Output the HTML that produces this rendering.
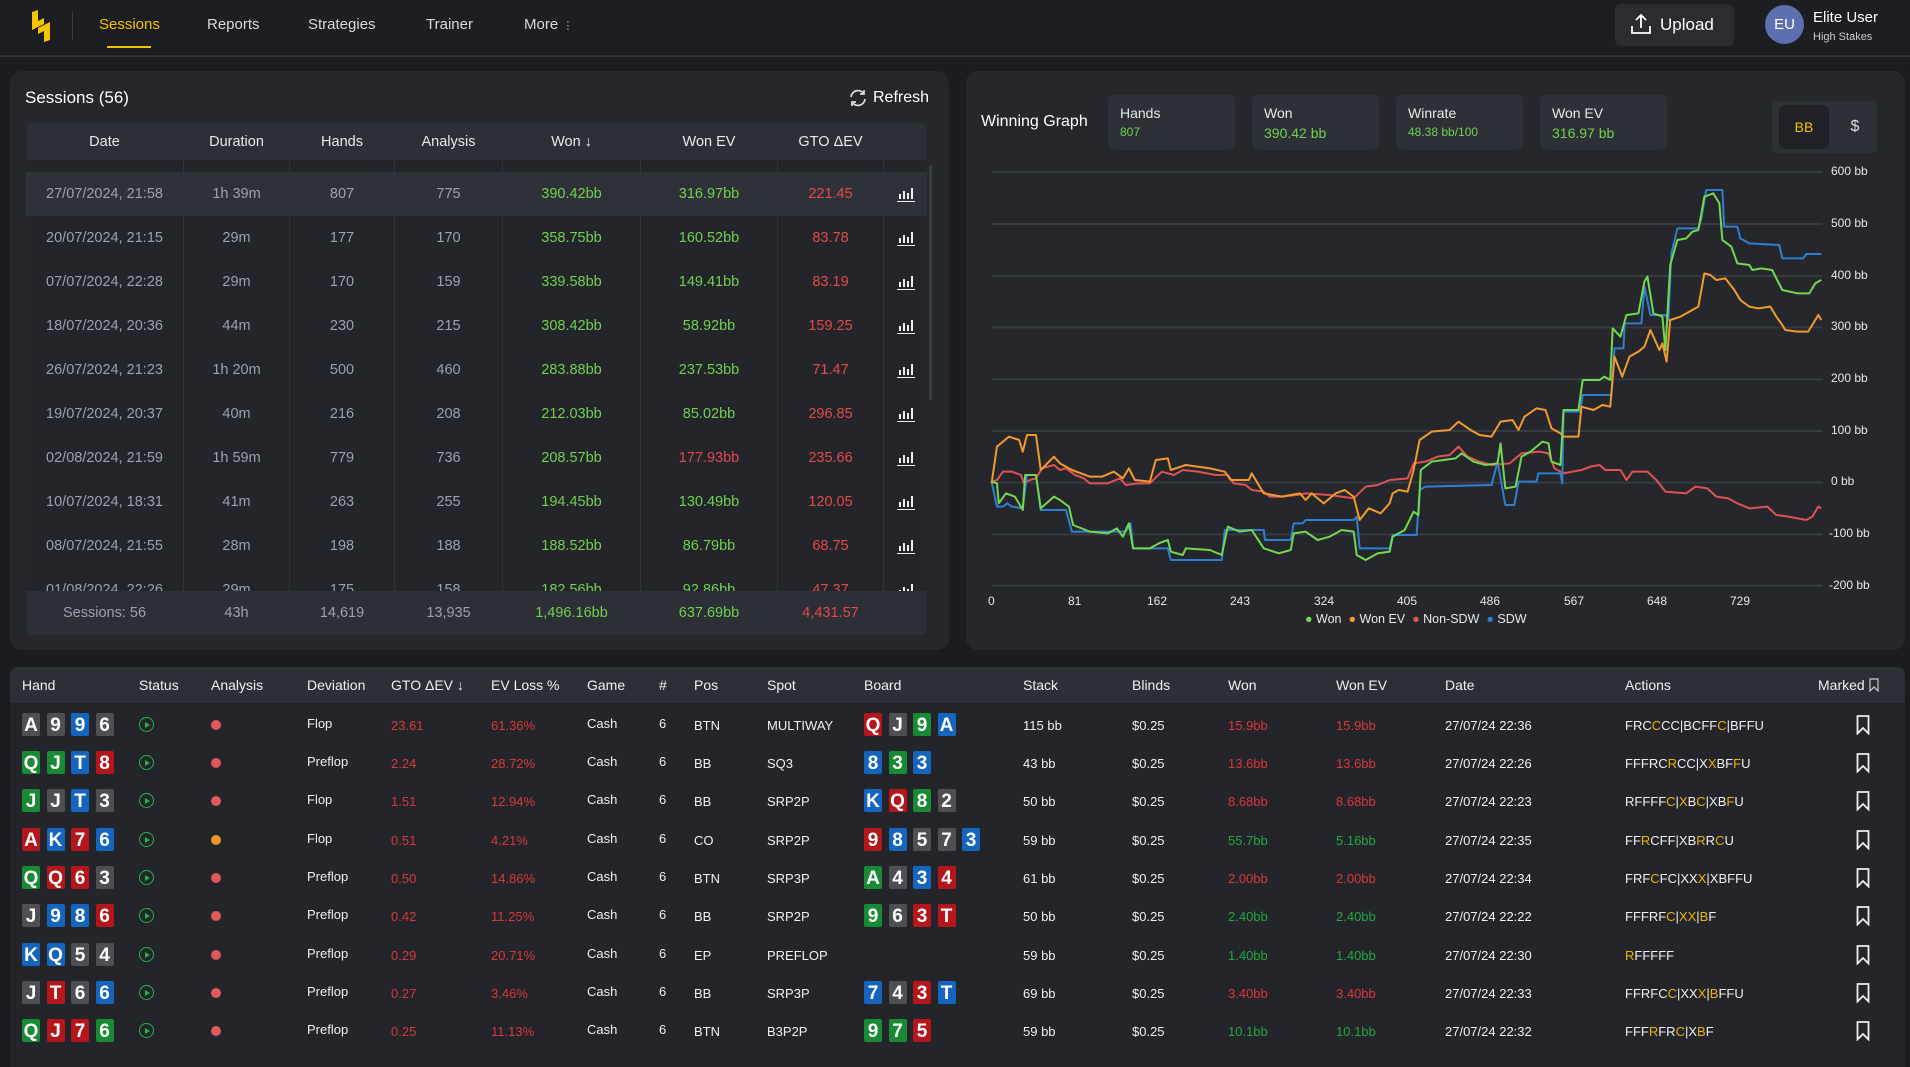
<!DOCTYPE html>
<html><head><meta charset="utf-8">
<style>
*{box-sizing:border-box;margin:0;padding:0}
body{width:1910px;height:1052px;background:#1b1c20;font-family:"Liberation Sans",sans-serif;color:#e8e8ea;position:relative;overflow:hidden}
.a{position:absolute}
.nav{left:0;top:0;width:1910px;height:57px;background:#1d1e22;border-bottom:2px solid #2e3036}
.ni{top:16px;font-size:15px;color:#d8d9dc}
.panel{background:#25272c;border-radius:12px}
.st{position:absolute;left:26px;width:901px;display:flex;align-items:center;font-size:14.5px;color:#9aa1b2}
.st div{text-align:center;border-right:1px solid #30333a;height:100%;display:flex;align-items:center;justify-content:center}
.st div:nth-child(1){width:158px}.st div:nth-child(2){width:106px}.st div:nth-child(3){width:105px}.st div:nth-child(4){width:108px}.st div:nth-child(5){width:138px}.st div:nth-child(6){width:137px}.st div:nth-child(7){width:106px}.st div:nth-child(8){width:43px;border-right:none}
.g{color:#6fd14d}.r{color:#e24a4a}
.bar{display:inline-block;width:18px;height:16px;position:relative}
.bar i{position:absolute;bottom:3px;width:2px;background:#eee}
.bar b{position:absolute;bottom:0;left:0;width:18px;height:1.5px;background:#eee}
.box{background:#2e3037;border-radius:6px;position:absolute;top:95px;height:55px;width:127px;padding:10px 12px;font-size:14px}
.box span{display:block;font-size:14px;color:#6fd14d;margin-top:4px}
.hr{position:absolute;left:10px;width:1895px;height:38px;font-size:13px;color:#f0f0f2}
.hr>*{position:absolute;top:12px}
.c{display:inline-block;width:18px;height:23px;border-radius:2px;color:#fff;font-weight:bold;font-style:normal;font-size:19px;text-align:center;line-height:25px;margin-right:6.5px;vertical-align:top}
.s{background:#4e4f52}.h{background:#b4161b}.d{background:#1565bf}.k{background:#178a33}
.cards{top:7px!important}
.play{top:11px!important;width:15px;height:15px;border:1.5px solid #22b24c;border-radius:50%}
.play:after{content:"";position:absolute;left:5px;top:3.5px;border-left:5px solid #22b24c;border-top:3.5px solid transparent;border-bottom:3.5px solid transparent}
.dot{top:14px!important;width:10px;height:10px;border-radius:50%;background:#e05858}
.rr{color:#d8383a}.gg{color:#22a83e}.y{color:#e9b500;font-weight:normal}
.bm{top:9px!important}
</style></head><body>

<!-- NAV -->
<div class="a nav"></div>
<svg class="a" style="left:31px;top:10px" width="20" height="32" viewBox="0 0 20 32"><path d="M1 2 L7 0 L7 11 L13 8 L13 14 L1 20 Z" fill="#f5c400"/><path d="M19 12 L19 30 L13 32 L13 21 L7 24 L7 18 Z" fill="#f5c400"/></svg>
<div class="a" style="left:72px;top:12px;width:1px;height:28px;background:#3a3c42"></div>
<div class="a ni" style="left:99px;color:#f5c400">Sessions</div>
<div class="a" style="left:107px;top:46px;width:44px;height:2px;background:#f5c400"></div>
<div class="a ni" style="left:207px">Reports</div>
<div class="a ni" style="left:308px">Strategies</div>
<div class="a ni" style="left:426px">Trainer</div>
<div class="a ni" style="left:524px">More <span style="font-size:11px;color:#aaa">⋮</span></div>
<div class="a" style="left:1615px;top:4px;width:119px;height:42px;background:#2a2c31;border-radius:6px"></div>
<svg class="a" style="left:1630px;top:13px" width="22" height="22" viewBox="0 0 22 22" fill="none" stroke="#fff" stroke-width="1.8"><path d="M11 15 V2 M6 7 L11 2 L16 7 M2 13 V20 H20 V13"/></svg>
<div class="a" style="left:1660px;top:15px;font-size:17px;color:#fff">Upload</div>
<div class="a" style="left:1765px;top:5px;width:39px;height:39px;border-radius:50%;background:#5c6fae;color:#fff;font-size:15px;text-align:center;line-height:39px">EU</div>
<div class="a" style="left:1813px;top:9px;font-size:15px;color:#fff">Elite User</div>
<div class="a" style="left:1813px;top:31px;font-size:11px;color:#c8c9cc">High Stakes</div>

<!-- SESSIONS PANEL -->
<div class="a panel" style="left:10px;top:71px;width:939px;height:579px"></div>
<div class="a" style="left:25px;top:88px;font-size:17px;color:#fff">Sessions (56)</div>
<svg class="a" style="left:848px;top:88px" width="20" height="20" viewBox="0 0 20 20" fill="none" stroke="#ddd" stroke-width="1.7"><path d="M3 9 A7 7 0 0 1 16 6 M16 2 V6 H12 M17 11 A7 7 0 0 1 4 14 M4 18 V14 H8"/></svg>
<div class="a" style="left:873px;top:89px;font-size:16px;color:#fff">Refresh</div>
<div class="a" style="left:26px;top:123px;width:901px;height:512px;background:#23252b;border-radius:6px;overflow:hidden">
</div>
<div class="st" style="top:123px;height:37px;background:#2c2f36;color:#e8e8ea;font-size:14.5px;border-radius:6px 6px 0 0"><div>Date</div><div>Duration</div><div>Hands</div><div>Analysis</div><div>Won ↓</div><div>Won EV</div><div>GTO ΔEV</div><div></div></div>
<div class="st" style="top:160px;height:12px"><div></div><div></div><div></div><div></div><div></div><div></div><div></div><div></div></div>
<div class="st" style="top:172px;height:44px;background:#2f3138"><div>27/07/2024, 21:58</div><div>1h 39m</div><div>807</div><div>775</div><div class="g">390.42bb</div><div class="g">316.97bb</div><div class="r">221.45</div><div><span class="bar"><i style="left:2px;height:5px"></i><i style="left:6px;height:8px"></i><i style="left:10px;height:6px"></i><i style="left:14px;height:11px"></i><b></b></span></div></div>
<div class="st" style="top:216px;height:44px"><div>20/07/2024, 21:15</div><div>29m</div><div>177</div><div>170</div><div class="g">358.75bb</div><div class="g">160.52bb</div><div class="r">83.78</div><div><span class="bar"><i style="left:2px;height:5px"></i><i style="left:6px;height:8px"></i><i style="left:10px;height:6px"></i><i style="left:14px;height:11px"></i><b></b></span></div></div>
<div class="st" style="top:260px;height:44px"><div>07/07/2024, 22:28</div><div>29m</div><div>170</div><div>159</div><div class="g">339.58bb</div><div class="g">149.41bb</div><div class="r">83.19</div><div><span class="bar"><i style="left:2px;height:5px"></i><i style="left:6px;height:8px"></i><i style="left:10px;height:6px"></i><i style="left:14px;height:11px"></i><b></b></span></div></div>
<div class="st" style="top:304px;height:44px"><div>18/07/2024, 20:36</div><div>44m</div><div>230</div><div>215</div><div class="g">308.42bb</div><div class="g">58.92bb</div><div class="r">159.25</div><div><span class="bar"><i style="left:2px;height:5px"></i><i style="left:6px;height:8px"></i><i style="left:10px;height:6px"></i><i style="left:14px;height:11px"></i><b></b></span></div></div>
<div class="st" style="top:348px;height:44px"><div>26/07/2024, 21:23</div><div>1h 20m</div><div>500</div><div>460</div><div class="g">283.88bb</div><div class="g">237.53bb</div><div class="r">71.47</div><div><span class="bar"><i style="left:2px;height:5px"></i><i style="left:6px;height:8px"></i><i style="left:10px;height:6px"></i><i style="left:14px;height:11px"></i><b></b></span></div></div>
<div class="st" style="top:392px;height:44px"><div>19/07/2024, 20:37</div><div>40m</div><div>216</div><div>208</div><div class="g">212.03bb</div><div class="g">85.02bb</div><div class="r">296.85</div><div><span class="bar"><i style="left:2px;height:5px"></i><i style="left:6px;height:8px"></i><i style="left:10px;height:6px"></i><i style="left:14px;height:11px"></i><b></b></span></div></div>
<div class="st" style="top:436px;height:44px"><div>02/08/2024, 21:59</div><div>1h 59m</div><div>779</div><div>736</div><div class="g">208.57bb</div><div class="r">177.93bb</div><div class="r">235.66</div><div><span class="bar"><i style="left:2px;height:5px"></i><i style="left:6px;height:8px"></i><i style="left:10px;height:6px"></i><i style="left:14px;height:11px"></i><b></b></span></div></div>
<div class="st" style="top:480px;height:44px"><div>10/07/2024, 18:31</div><div>41m</div><div>263</div><div>255</div><div class="g">194.45bb</div><div class="g">130.49bb</div><div class="r">120.05</div><div><span class="bar"><i style="left:2px;height:5px"></i><i style="left:6px;height:8px"></i><i style="left:10px;height:6px"></i><i style="left:14px;height:11px"></i><b></b></span></div></div>
<div class="st" style="top:524px;height:44px"><div>08/07/2024, 21:55</div><div>28m</div><div>198</div><div>188</div><div class="g">188.52bb</div><div class="g">86.79bb</div><div class="r">68.75</div><div><span class="bar"><i style="left:2px;height:5px"></i><i style="left:6px;height:8px"></i><i style="left:10px;height:6px"></i><i style="left:14px;height:11px"></i><b></b></span></div></div>
<div class="st" style="top:568px;height:44px"><div>01/08/2024, 22:26</div><div>29m</div><div>175</div><div>158</div><div class="g">182.56bb</div><div class="g">92.86bb</div><div class="r">47.37</div><div><span class="bar"><i style="left:2px;height:5px"></i><i style="left:6px;height:8px"></i><i style="left:10px;height:6px"></i><i style="left:14px;height:11px"></i><b></b></span></div></div>
<div class="st" style="top:612px;height:23px"><div></div><div></div><div></div><div></div><div></div><div></div><div></div><div></div></div>
<div class="st" style="top:591px;height:44px;background:#2d2f36;border-radius:0 0 6px 6px"><div>Sessions: 56</div><div>43h</div><div>14,619</div><div>13,935</div><div class="g">1,496.16bb</div><div class="g">637.69bb</div><div class="r">4,431.57</div><div></div></div>
<div class="a" style="left:929px;top:165px;width:3px;height:235px;background:#3a3d44;border-radius:2px"></div>

<!-- GRAPH PANEL -->
<div class="a panel" style="left:966px;top:71px;width:939px;height:579px"></div>
<div class="a" style="left:981px;top:113px;font-size:16px;color:#fff">Winning Graph</div>
<div class="box" style="left:1108px">Hands<span style="font-size:12px">807</span></div>
<div class="box" style="left:1252px">Won<span>390.42 bb</span></div>
<div class="box" style="left:1396px">Winrate<span style="font-size:12px">48.38 bb/100</span></div>
<div class="box" style="left:1540px">Won EV<span>316.97 bb</span></div>
<div class="a" style="left:1772px;top:101px;width:105px;height:52px;background:#2e3037;border-radius:6px"></div>
<div class="a" style="left:1779px;top:105px;width:50px;height:44px;background:#202227;border-radius:5px;color:#f5c400;font-size:14px;text-align:center;line-height:44px">BB</div>
<div class="a" style="left:1840px;top:105px;width:30px;height:44px;color:#ddd;font-size:16px;text-align:center;line-height:44px">$</div>

<svg class="a" style="left:970px;top:150px" width="940" height="500" viewBox="0 0 1568 1500" preserveAspectRatio="none">
<g stroke="#383a41" stroke-width="2">
<line x1="36" x2="1422" y1="66" y2="66" vector-effect="non-scaling-stroke"/><line x1="36" x2="1422" y1="222" y2="222" vector-effect="non-scaling-stroke"/><line x1="36" x2="1422" y1="378" y2="378" vector-effect="non-scaling-stroke"/><line x1="36" x2="1422" y1="532" y2="532" vector-effect="non-scaling-stroke"/><line x1="36" x2="1422" y1="688" y2="688" vector-effect="non-scaling-stroke"/><line x1="36" x2="1422" y1="843" y2="843" vector-effect="non-scaling-stroke"/><line x1="36" x2="1422" y1="998" y2="998" vector-effect="non-scaling-stroke"/><line x1="36" x2="1422" y1="1153" y2="1153" vector-effect="non-scaling-stroke"/><line x1="36" x2="1422" y1="1307" y2="1307" vector-effect="non-scaling-stroke"/>
</g>
<g fill="none" stroke-width="2" stroke-linejoin="round">
<polyline vector-effect="non-scaling-stroke" stroke="#e05252" points="36,995 45,990 55,965 70,965 85,975 90,1000 100,990 110,985 120,955 140,945 150,960 160,955 175,975 190,985 200,1000 230,1000 250,985 260,1005 280,1000 300,1000 320,965 340,975 355,960 380,965 410,975 430,975 440,1000 460,1005 470,1020 490,1025 500,1040 520,1040 545,1035 560,1030 600,1035 640,1045 660,1010 680,1005 700,990 730,985 740,940 760,935 780,920 800,915 815,890 830,920 850,935 870,945 900,940 920,910 950,905 965,910 975,955 990,970 1020,960 1035,950 1050,945 1060,960 1085,960 1095,990 1105,965 1130,965 1145,990 1160,1025 1195,1030 1210,1010 1230,1015 1245,1040 1265,1045 1280,1060 1300,1075 1330,1070 1345,1095 1365,1100 1395,1110 1405,1100 1415,1070 1420,1075"/>
<polyline vector-effect="non-scaling-stroke" stroke="#2f7fd0" points="36,995 45,1070 55,1070 62,1060 70,1070 88,1075 95,975 110,975 118,1080 160,1080 170,1145 260,1145 268,1120 272,1195 330,1195 335,1230 420,1230 425,1140 490,1140 492,1170 535,1170 540,1120 555,1120 560,1110 640,1110 645,1100 650,1195 700,1195 705,1155 745,1155 750,1020 760,1010 870,1005 880,935 893,1065 908,1065 915,995 945,995 948,970 985,970 988,1000 990,785 1018,785 1022,735 1070,735 1075,595 1090,595 1092,520 1120,520 1125,410 1135,495 1160,495 1165,510 1170,310 1180,235 1215,235 1220,205 1228,120 1255,120 1258,230 1280,230 1285,265 1300,280 1350,285 1355,325 1390,325 1395,312 1420,312"/>
<polyline vector-effect="non-scaling-stroke" stroke="#f29a2e" points="36,1000 45,890 65,860 82,870 88,905 95,855 110,855 118,960 140,920 150,940 170,960 200,980 220,980 240,965 255,985 265,955 275,990 300,995 310,930 330,925 335,960 360,945 400,955 425,965 435,990 465,990 470,970 490,1030 520,1040 550,1030 560,1050 570,1030 590,1060 610,1030 625,1020 640,1040 650,1110 665,1075 685,1090 700,1060 705,1030 715,1020 730,1025 740,960 750,870 770,845 800,840 815,815 835,840 850,855 870,860 885,815 905,810 915,840 925,800 945,775 960,780 970,835 985,850 990,860 1015,860 1020,770 1040,780 1055,765 1068,770 1075,620 1088,680 1100,620 1115,605 1125,590 1135,540 1150,600 1155,580 1162,635 1168,510 1185,500 1205,480 1215,470 1225,370 1235,375 1245,390 1260,385 1275,420 1285,450 1300,470 1315,475 1335,470 1345,500 1355,525 1360,540 1380,545 1398,545 1405,525 1415,495 1420,510"/>
<polyline vector-effect="non-scaling-stroke" stroke="#72d84f" points="36,995 45,1000 48,1060 60,1030 75,1040 88,1080 92,975 110,975 118,1075 140,1040 150,1050 165,1070 172,1125 200,1145 230,1150 245,1135 255,1160 265,1120 272,1195 300,1195 315,1180 330,1170 335,1205 355,1215 360,1195 400,1200 420,1215 430,1130 450,1145 470,1140 490,1195 515,1210 535,1200 540,1150 560,1145 580,1170 600,1160 620,1140 640,1145 645,1215 660,1230 680,1210 700,1205 705,1160 725,1140 740,1085 748,1095 752,960 770,935 810,925 820,910 840,935 860,945 880,940 885,880 893,1015 910,1010 920,920 935,905 955,875 965,880 970,935 985,945 990,780 1015,780 1022,690 1050,690 1058,680 1068,690 1072,535 1085,560 1095,495 1115,490 1125,395 1130,380 1140,490 1155,500 1160,600 1168,345 1180,270 1195,265 1205,245 1215,240 1225,140 1240,130 1250,160 1255,270 1270,290 1280,340 1300,345 1305,360 1320,355 1338,360 1345,385 1355,420 1380,430 1400,430 1410,400 1420,390"/>
</g>
</svg>
<div class="a" style="left:1831px;top:165px;font-size:12px;color:#e8e8ea;line-height:1">600 bb</div>
<div class="a" style="left:1831px;top:217px;font-size:12px;color:#e8e8ea;line-height:1">500 bb</div>
<div class="a" style="left:1831px;top:269px;font-size:12px;color:#e8e8ea;line-height:1">400 bb</div>
<div class="a" style="left:1831px;top:320px;font-size:12px;color:#e8e8ea;line-height:1">300 bb</div>
<div class="a" style="left:1831px;top:372px;font-size:12px;color:#e8e8ea;line-height:1">200 bb</div>
<div class="a" style="left:1831px;top:424px;font-size:12px;color:#e8e8ea;line-height:1">100 bb</div>
<div class="a" style="left:1831px;top:475px;font-size:12px;color:#e8e8ea;line-height:1">0 bb</div>
<div class="a" style="left:1829px;top:527px;font-size:12px;color:#e8e8ea;line-height:1">-100 bb</div>
<div class="a" style="left:1829px;top:579px;font-size:12px;color:#e8e8ea;line-height:1">-200 bb</div>
<div class="a" style="top:594px;left:988px;font-size:12px;color:#e8e8ea">0</div>
<div class="a" style="top:594px;left:1068px;font-size:12px;color:#e8e8ea">81</div>
<div class="a" style="top:594px;left:1147px;font-size:12px;color:#e8e8ea">162</div>
<div class="a" style="top:594px;left:1230px;font-size:12px;color:#e8e8ea">243</div>
<div class="a" style="top:594px;left:1314px;font-size:12px;color:#e8e8ea">324</div>
<div class="a" style="top:594px;left:1397px;font-size:12px;color:#e8e8ea">405</div>
<div class="a" style="top:594px;left:1480px;font-size:12px;color:#e8e8ea">486</div>
<div class="a" style="top:594px;left:1564px;font-size:12px;color:#e8e8ea">567</div>
<div class="a" style="top:594px;left:1647px;font-size:12px;color:#e8e8ea">648</div>
<div class="a" style="top:594px;left:1730px;font-size:12px;color:#e8e8ea">729</div>
<div class="a" style="top:612px;left:1305px;font-size:12.5px;color:#e8e8ea;white-space:nowrap">
<span style="color:#72d84f">●</span> Won &nbsp;<span style="color:#f29a2e">●</span> Won EV &nbsp;<span style="color:#e05252">●</span> Non-SDW &nbsp;<span style="color:#2f7fd0">●</span> SDW</div>

<!-- HANDS TABLE -->
<div class="a" style="left:10px;top:667px;width:1895px;height:400px;background:#23252b;border-radius:8px 8px 0 0"></div>
<div class="hr" style="top:667px;height:36px;background:#2c2f36;border-radius:8px 8px 0 0;font-size:14px">
<span style="left:12px;top:10px">Hand</span><span style="left:129px;top:10px">Status</span><span style="left:201px;top:10px">Analysis</span><span style="left:297px;top:10px">Deviation</span><span style="left:381px;top:10px">GTO ΔEV ↓</span><span style="left:481px;top:10px">EV Loss %</span><span style="left:577px;top:10px">Game</span><span style="left:649px;top:10px">#</span><span style="left:684px;top:10px">Pos</span><span style="left:757px;top:10px">Spot</span><span style="left:854px;top:10px">Board</span><span style="left:1013px;top:10px">Stack</span><span style="left:1122px;top:10px">Blinds</span><span style="left:1218px;top:10px">Won</span><span style="left:1326px;top:10px">Won EV</span><span style="left:1435px;top:10px">Date</span><span style="left:1615px;top:10px">Actions</span><span style="left:1808px;top:10px">Marked <svg width="10" height="14" viewBox="0 0 10 14" style="vertical-align:-2px" fill="none" stroke="#ccc" stroke-width="1.2"><path d="M1 1 H9 V13 L5 9 L1 13 Z"/></svg></span>
</div>

<div class="hr" style="top:706px"><span class="cards" style="left:12px"><i class="c s">A</i><i class="c s">9</i><i class="c d">9</i><i class="c s">6</i></span><span class="play" style="left:129px"></span><span class="dot" style="left:201px"></span><span style="left:297px;top:10px">Flop</span><span class="rr" style="left:381px">23.61</span><span class="rr" style="left:481px">61.36%</span><span style="left:577px;top:10px">Cash</span><span style="left:649px;top:10px">6</span><span style="left:684px">BTN</span><span style="left:757px">MULTIWAY</span><span class="cards" style="left:854px"><i class="c h">Q</i><i class="c s">J</i><i class="c k">9</i><i class="c d">A</i></span><span style="left:1013px">115 bb</span><span style="left:1122px">$0.25</span><span class="rr" style="left:1218px">15.9bb</span><span class="rr" style="left:1326px">15.9bb</span><span style="left:1435px">27/07/24 22:36</span><span style="left:1615px">FRC<b class="y">C</b>CC|BCFF<b class="y">C</b>|BFFU</span><svg class="a bm" style="left:1846px" width="14" height="20" viewBox="0 0 14 20" fill="none" stroke="#eee" stroke-width="1.8"><path d="M1.5 1 H12.5 V18.5 L7 13 L1.5 18.5 Z"/></svg></div>

<div class="hr" style="top:744px"><span class="cards" style="left:12px"><i class="c k">Q</i><i class="c k">J</i><i class="c d">T</i><i class="c h">8</i></span><span class="play" style="left:129px"></span><span class="dot" style="left:201px"></span><span style="left:297px;top:10px">Preflop</span><span class="rr" style="left:381px">2.24</span><span class="rr" style="left:481px">28.72%</span><span style="left:577px;top:10px">Cash</span><span style="left:649px;top:10px">6</span><span style="left:684px">BB</span><span style="left:757px">SQ3</span><span class="cards" style="left:854px"><i class="c d">8</i><i class="c k">3</i><i class="c d">3</i></span><span style="left:1013px">43 bb</span><span style="left:1122px">$0.25</span><span class="rr" style="left:1218px">13.6bb</span><span class="rr" style="left:1326px">13.6bb</span><span style="left:1435px">27/07/24 22:26</span><span style="left:1615px">FFFRC<b class="y">R</b>CC|X<b class="y">X</b>BF<b class="y">F</b>U</span><svg class="a bm" style="left:1846px" width="14" height="20" viewBox="0 0 14 20" fill="none" stroke="#eee" stroke-width="1.8"><path d="M1.5 1 H12.5 V18.5 L7 13 L1.5 18.5 Z"/></svg></div>

<div class="hr" style="top:782px"><span class="cards" style="left:12px"><i class="c k">J</i><i class="c s">J</i><i class="c d">T</i><i class="c s">3</i></span><span class="play" style="left:129px"></span><span class="dot" style="left:201px"></span><span style="left:297px;top:10px">Flop</span><span class="rr" style="left:381px">1.51</span><span class="rr" style="left:481px">12.94%</span><span style="left:577px;top:10px">Cash</span><span style="left:649px;top:10px">6</span><span style="left:684px">BB</span><span style="left:757px">SRP2P</span><span class="cards" style="left:854px"><i class="c d">K</i><i class="c h">Q</i><i class="c k">8</i><i class="c s">2</i></span><span style="left:1013px">50 bb</span><span style="left:1122px">$0.25</span><span class="rr" style="left:1218px">8.68bb</span><span class="rr" style="left:1326px">8.68bb</span><span style="left:1435px">27/07/24 22:23</span><span style="left:1615px">RFFFF<b class="y">C</b>|<b class="y">X</b>B<b class="y">C</b>|XB<b class="y">F</b>U</span><svg class="a bm" style="left:1846px" width="14" height="20" viewBox="0 0 14 20" fill="none" stroke="#eee" stroke-width="1.8"><path d="M1.5 1 H12.5 V18.5 L7 13 L1.5 18.5 Z"/></svg></div>

<div class="hr" style="top:821px"><span class="cards" style="left:12px"><i class="c h">A</i><i class="c d">K</i><i class="c h">7</i><i class="c d">6</i></span><span class="play" style="left:129px"></span><span class="dot" style="left:201px;background:#f0962c"></span><span style="left:297px;top:10px">Flop</span><span class="rr" style="left:381px">0.51</span><span class="rr" style="left:481px">4.21%</span><span style="left:577px;top:10px">Cash</span><span style="left:649px;top:10px">6</span><span style="left:684px">CO</span><span style="left:757px">SRP2P</span><span class="cards" style="left:854px"><i class="c h">9</i><i class="c d">8</i><i class="c s">5</i><i class="c s">7</i><i class="c d">3</i></span><span style="left:1013px">59 bb</span><span style="left:1122px">$0.25</span><span class="gg" style="left:1218px">55.7bb</span><span class="gg" style="left:1326px">5.16bb</span><span style="left:1435px">27/07/24 22:35</span><span style="left:1615px">FF<b class="y">R</b>CFF|XB<b class="y">R</b>R<b class="y">C</b>U</span><svg class="a bm" style="left:1846px" width="14" height="20" viewBox="0 0 14 20" fill="none" stroke="#eee" stroke-width="1.8"><path d="M1.5 1 H12.5 V18.5 L7 13 L1.5 18.5 Z"/></svg></div>

<div class="hr" style="top:859px"><span class="cards" style="left:12px"><i class="c k">Q</i><i class="c h">Q</i><i class="c h">6</i><i class="c s">3</i></span><span class="play" style="left:129px"></span><span class="dot" style="left:201px"></span><span style="left:297px;top:10px">Preflop</span><span class="rr" style="left:381px">0.50</span><span class="rr" style="left:481px">14.86%</span><span style="left:577px;top:10px">Cash</span><span style="left:649px;top:10px">6</span><span style="left:684px">BTN</span><span style="left:757px">SRP3P</span><span class="cards" style="left:854px"><i class="c k">A</i><i class="c s">4</i><i class="c d">3</i><i class="c h">4</i></span><span style="left:1013px">61 bb</span><span style="left:1122px">$0.25</span><span class="rr" style="left:1218px">2.00bb</span><span class="rr" style="left:1326px">2.00bb</span><span style="left:1435px">27/07/24 22:34</span><span style="left:1615px">FRF<b class="y">C</b>FC|XX<b class="y">X</b>|XBFFU</span><svg class="a bm" style="left:1846px" width="14" height="20" viewBox="0 0 14 20" fill="none" stroke="#eee" stroke-width="1.8"><path d="M1.5 1 H12.5 V18.5 L7 13 L1.5 18.5 Z"/></svg></div>

<div class="hr" style="top:897px"><span class="cards" style="left:12px"><i class="c s">J</i><i class="c d">9</i><i class="c d">8</i><i class="c h">6</i></span><span class="play" style="left:129px"></span><span class="dot" style="left:201px"></span><span style="left:297px;top:10px">Preflop</span><span class="rr" style="left:381px">0.42</span><span class="rr" style="left:481px">11.25%</span><span style="left:577px;top:10px">Cash</span><span style="left:649px;top:10px">6</span><span style="left:684px">BB</span><span style="left:757px">SRP2P</span><span class="cards" style="left:854px"><i class="c k">9</i><i class="c s">6</i><i class="c h">3</i><i class="c h">T</i></span><span style="left:1013px">50 bb</span><span style="left:1122px">$0.25</span><span class="gg" style="left:1218px">2.40bb</span><span class="gg" style="left:1326px">2.40bb</span><span style="left:1435px">27/07/24 22:22</span><span style="left:1615px">FFFRF<b class="y">C</b>|<b class="y">XX</b>|<b class="y">B</b>F</span><svg class="a bm" style="left:1846px" width="14" height="20" viewBox="0 0 14 20" fill="none" stroke="#eee" stroke-width="1.8"><path d="M1.5 1 H12.5 V18.5 L7 13 L1.5 18.5 Z"/></svg></div>

<div class="hr" style="top:936px"><span class="cards" style="left:12px"><i class="c d">K</i><i class="c d">Q</i><i class="c s">5</i><i class="c s">4</i></span><span class="play" style="left:129px"></span><span class="dot" style="left:201px"></span><span style="left:297px;top:10px">Preflop</span><span class="rr" style="left:381px">0.29</span><span class="rr" style="left:481px">20.71%</span><span style="left:577px;top:10px">Cash</span><span style="left:649px;top:10px">6</span><span style="left:684px">EP</span><span style="left:757px">PREFLOP</span><span style="left:1013px">59 bb</span><span style="left:1122px">$0.25</span><span class="gg" style="left:1218px">1.40bb</span><span class="gg" style="left:1326px">1.40bb</span><span style="left:1435px">27/07/24 22:30</span><span style="left:1615px"><b class="y">R</b>FFFFF</span><svg class="a bm" style="left:1846px" width="14" height="20" viewBox="0 0 14 20" fill="none" stroke="#eee" stroke-width="1.8"><path d="M1.5 1 H12.5 V18.5 L7 13 L1.5 18.5 Z"/></svg></div>

<div class="hr" style="top:974px"><span class="cards" style="left:12px"><i class="c s">J</i><i class="c h">T</i><i class="c s">6</i><i class="c d">6</i></span><span class="play" style="left:129px"></span><span class="dot" style="left:201px"></span><span style="left:297px;top:10px">Preflop</span><span class="rr" style="left:381px">0.27</span><span class="rr" style="left:481px">3.46%</span><span style="left:577px;top:10px">Cash</span><span style="left:649px;top:10px">6</span><span style="left:684px">BB</span><span style="left:757px">SRP3P</span><span class="cards" style="left:854px"><i class="c d">7</i><i class="c s">4</i><i class="c h">3</i><i class="c d">T</i></span><span style="left:1013px">69 bb</span><span style="left:1122px">$0.25</span><span class="rr" style="left:1218px">3.40bb</span><span class="rr" style="left:1326px">3.40bb</span><span style="left:1435px">27/07/24 22:33</span><span style="left:1615px">FFRFC<b class="y">C</b>|XX<b class="y">X</b>|<b class="y">B</b>FFU</span><svg class="a bm" style="left:1846px" width="14" height="20" viewBox="0 0 14 20" fill="none" stroke="#eee" stroke-width="1.8"><path d="M1.5 1 H12.5 V18.5 L7 13 L1.5 18.5 Z"/></svg></div>

<div class="hr" style="top:1012px"><span class="cards" style="left:12px"><i class="c k">Q</i><i class="c h">J</i><i class="c h">7</i><i class="c k">6</i></span><span class="play" style="left:129px"></span><span class="dot" style="left:201px"></span><span style="left:297px;top:10px">Preflop</span><span class="rr" style="left:381px">0.25</span><span class="rr" style="left:481px">11.13%</span><span style="left:577px;top:10px">Cash</span><span style="left:649px;top:10px">6</span><span style="left:684px">BTN</span><span style="left:757px">B3P2P</span><span class="cards" style="left:854px"><i class="c k">9</i><i class="c k">7</i><i class="c h">5</i></span><span style="left:1013px">59 bb</span><span style="left:1122px">$0.25</span><span class="gg" style="left:1218px">10.1bb</span><span class="gg" style="left:1326px">10.1bb</span><span style="left:1435px">27/07/24 22:32</span><span style="left:1615px">FFF<b class="y">R</b>FR<b class="y">C</b>|X<b class="y">B</b>F</span><svg class="a bm" style="left:1846px" width="14" height="20" viewBox="0 0 14 20" fill="none" stroke="#eee" stroke-width="1.8"><path d="M1.5 1 H12.5 V18.5 L7 13 L1.5 18.5 Z"/></svg></div>

</body></html>
